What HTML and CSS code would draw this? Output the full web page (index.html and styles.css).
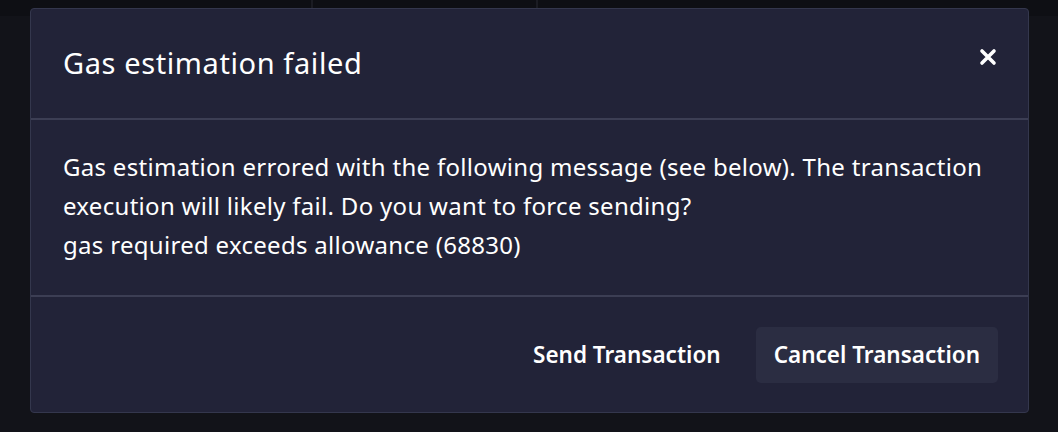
FILE: index.html
```html
<!DOCTYPE html>
<html lang="en">
<head>
<meta charset="utf-8">
<title>Gas estimation failed</title>
<link rel="stylesheet" href="styles.css">
</head>
<body>
<div class="backdrop">
  <div class="topbar">
    <div class="seg seg-a"></div>
    <div class="seg seg-b"></div>
    <div class="seg seg-c"></div>
  </div>
  <div class="modal">
    <div class="modal-header">
      <h2 class="modal-title">Gas estimation failed</h2>
      <button class="close-btn" aria-label="Close">
        <svg width="18" height="18" viewBox="0 0 18 18"><path d="M3 3 L15 15 M15 3 L3 15" stroke="#fff" stroke-width="3.6" stroke-linecap="round"/></svg>
      </button>
    </div>
    <div class="modal-body">
      <p>Gas estimation errored with the following message (see below). The transaction execution will likely fail. Do you want to force sending?<br>gas required exceeds allowance (68830)</p>
    </div>
    <div class="modal-footer">
      <button class="btn btn-ghost">Send Transaction</button>
      <button class="btn btn-solid">Cancel Transaction</button>
    </div>
  </div>
</div>
</body>
</html>
```

FILE: styles.css
```css
* { box-sizing: border-box; }
html, body { margin: 0; padding: 0; }
body {
  background: #101117;
  font-family: "Noto Sans", "Open Sans", sans-serif;
  color: #ffffff;
  width: 1058px;
  height: 432px;
  overflow: hidden;
}
.backdrop {
  position: relative;
  height: 432px;
  padding: 8px 29px 0 30px;
  background: #121319;
}
.topbar {
  position: absolute;
  left: 0; top: 0; right: 0;
  height: 16px;
  display: flex;
  background: #0e0f14;
}
.seg { height: 100%; }
.seg-a { width: 313px; border-right: 2px solid #1b1c23; }
.seg-b { width: 225px; border-right: 2px solid #1b1c23; }
.seg-c { flex: 1; }
.modal {
  position: relative;
  width: 999px;
  background: #222338;
  border: 1px solid #34374d;
  border-radius: 4px;
}
.modal-header {
  height: 111px;
  padding: 0 31px 0 32px;
  display: flex;
  align-items: center;
  justify-content: space-between;
  border-bottom: 2px solid #3c3e54;
}
.modal-title {
  margin: 0;
  font-size: 29px;
  font-weight: 400;
  letter-spacing: 0.6px;
  margin-top: -2px;
}
.close-btn {
  background: none;
  border: 0;
  padding: 0;
  margin-top: -14px;
  display: flex;
  cursor: pointer;
}
.modal-body {
  padding: 27px 32px 31px;
  border-bottom: 2px solid #3c3e54;
}
.modal-body p {
  margin: 0;
  font-size: 24px;
  letter-spacing: 0.3px;
  line-height: 39px;
}
.modal-footer {
  height: 115px;
  padding: 0 30px;
  display: flex;
  align-items: center;
  justify-content: flex-end;
  gap: 17px;
}
.btn {
  font-family: inherit;
  font-size: 22.5px;
  font-weight: 600;
  color: #ffffff;
  border: 0;
  border-radius: 5px;
  height: 56px;
  padding: 0 18px;
  background: transparent;
}
.btn-solid { background: #2b2d42; }
```
